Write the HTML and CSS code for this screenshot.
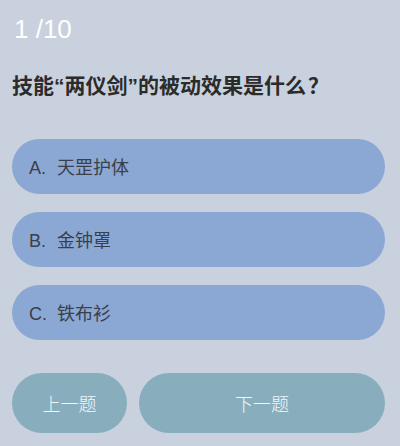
FILE: index.html
```html
<!DOCTYPE html>
<html lang="zh-CN">
<head>
<meta charset="utf-8">
<link rel="stylesheet" href="styles.css">
</head>
<body>
<div class="quiz">
  <div class="counter">1 /10</div>
  <div class="question">技能<span class="q">“</span>两仪剑<span class="q">”</span>的被动效果是什么<span class="qm">？</span></div>
  <div class="options">
    <div class="option"><div class="text"><span class="letter">A.</span>天罡护体</div></div>
    <div class="option"><div class="text"><span class="letter">B.</span>金钟罩</div></div>
    <div class="option"><div class="text"><span class="letter">C.</span>铁布衫</div></div>
  </div>
  <div class="nav">
    <div class="btn prev">上一题</div>
    <div class="btn next">下一题</div>
  </div>
</div>
</body>
</html>
```
FILE: styles.css
```css
html, body {
  margin: 0;
  padding: 0;
  background: #c8d1dd;
  width: 400px;
  height: 446px;
  overflow: hidden;
}
.quiz {
  padding: 14px 15px 0 12px;
  font-family: "Liberation Sans", "Noto Sans CJK SC", sans-serif;
}
.counter {
  font-size: 26px;
  line-height: 30px;
  color: #ffffff;
  padding-left: 2px;
}
.question {
  margin-top: 28px;
  height: 24px;
  font-size: 21px;
  line-height: 24px;
  font-weight: bold;
  color: #2b2b2b;
  font-family: "Noto Sans CJK SC", sans-serif;
  text-spacing-trim: space-all;
  white-space: nowrap;
}
.question .q {
  font-family: "Liberation Sans", sans-serif;
}
.question .qm {
  font-family: "Noto Sans CJK JP", sans-serif;
  padding-left: 2px;
}
.options {
  margin-top: 43px;
  display: flex;
  flex-direction: column;
  gap: 18px;
}
.option {
  height: 55px;
  border-radius: 28px;
  background: #8ba8d4;
  display: flex;
  align-items: center;
  padding-left: 17px;
  color: #3a3f4a;
}
.text {
  font-size: 18px;
  line-height: 24px;
  font-family: "Noto Sans CJK SC", sans-serif;
}
.letter {
  display: inline-block;
  font-family: "Liberation Sans", sans-serif;
  width: 28px;
}
.nav {
  margin-top: 33px;
  display: flex;
  gap: 12px;
}
.btn {
  height: 60px;
  border-radius: 30px;
  background: #88aebe;
  color: #f2f6f8;
  font-size: 18px;
  font-family: "Noto Sans CJK SC", sans-serif;
  font-weight: 300;
  display: flex;
  align-items: center;
  justify-content: center;
}
.prev {
  width: 115px;
}
.next {
  flex: 1;
}
```
